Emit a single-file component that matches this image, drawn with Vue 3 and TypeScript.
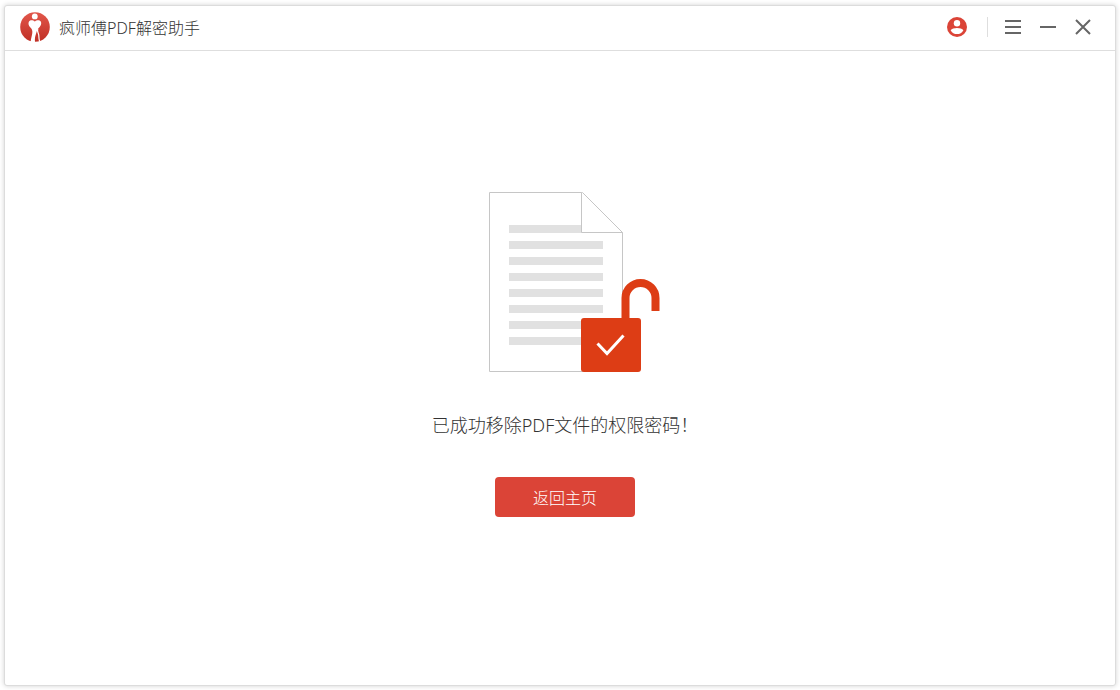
<script setup lang="ts">
import { ref } from 'vue'

const appName = ref('疯师傅PDF解密助手')
const message = ref('已成功移除PDF文件的权限密码！')
const lines: { y: number; width: number }[] = [
  { y: 33, width: 73 },
  { y: 49, width: 94 },
  { y: 65, width: 94 },
  { y: 81, width: 94 },
  { y: 97, width: 94 },
  { y: 113, width: 94 },
  { y: 129, width: 94 },
  { y: 145, width: 94 },
]
</script>

<template>
  <div class="desktop">
    <div class="window">
      <header class="titlebar">
        <svg class="logo" viewBox="0 0 30 30" aria-hidden="true">
          <defs>
            <linearGradient id="logo-fill" x1="0" y1="0" x2="0" y2="1">
              <stop offset="0" stop-color="#e2574b" />
              <stop offset="1" stop-color="#c02f25" />
            </linearGradient>
          </defs>
          <circle cx="15" cy="15" r="14.8" fill="url(#logo-fill)" />
          <circle cx="14.8" cy="4.4" r="2.9" fill="#fff" />
          <path
            d="M14.8 9.6C13 7.8 10.2 7.7 9 9.6C7.8 11.6 8.8 14 10.4 15.6C11.8 17 12.6 18.6 12.3 21C12 23.8 10.9 26.6 10.6 30H15C14.7 27 15 24.4 15.9 22.2C16.9 20 16.6 18.4 18.2 16.6C20.4 14.6 22 12 20.8 9.6C19.5 7.6 16.6 7.8 14.8 9.6Z"
            fill="#fff"
          />
          <path d="M17.8 16.5C16.8 19.6 18.6 21 18.8 23.5C18.9 25.5 18.9 27.3 19.6 29.6" fill="none" stroke="#fff" stroke-width="1.2" />
        </svg>
        <h1 class="title">{{ appName }}</h1>
        <button class="icon-button account" type="button" aria-label="账户">
          <svg viewBox="0 0 20 20" width="20" height="20">
            <circle cx="10" cy="10" r="10" fill="#db4437" />
            <circle cx="10" cy="6.2" r="3.2" fill="#fff" />
            <path d="M3.6 13.2C4.8 11.8 7.2 11 10 11S15.2 11.8 16.4 13.2C15 15.8 12.7 17.1 10 17.1S5 15.8 3.6 13.2Z" fill="#fff" />
          </svg>
        </button>
        <span class="divider"></span>
        <div class="controls">
          <button class="icon-button" type="button" aria-label="菜单">
            <svg viewBox="0 0 16 16" width="16" height="16">
              <path d="M0 2H16M0 8H16M0 14H16" />
            </svg>
          </button>
          <button class="icon-button" type="button" aria-label="最小化">
            <svg viewBox="0 0 16 16" width="16" height="16">
              <path d="M0 8H16" />
            </svg>
          </button>
          <button class="icon-button" type="button" aria-label="关闭">
            <svg viewBox="0 0 16 16" width="16" height="16">
              <path d="M1 1L15 15M15 1L1 15" />
            </svg>
          </button>
        </div>
      </header>

      <main class="content">
        <svg class="illustration" viewBox="0 0 152 180" aria-hidden="true">
          <path d="M0.5 0.5H93.5L133.5 40.5V179.5H0.5Z" fill="#fff" stroke="#c6c6c6" />
          <rect v-for="line in lines" :key="line.y" x="20" :y="line.y" :width="line.width" height="8" fill="#e1e1e1" />
          <path d="M92.5 0.5V40.5H133.5L93.5 0.5" fill="#fff" stroke="#c6c6c6" />
          <path d="M136.5 128V106A15 15 0 0 1 166.5 106V119" fill="none" stroke="#dd3d15" stroke-width="8" />
          <rect x="92" y="126" width="60" height="54" rx="3" fill="#dd3d15" />
          <path d="M108.5 151.5L118 161.5L134.5 143.5" fill="none" stroke="#fff" stroke-width="3" />
        </svg>
        <p class="message">{{ message }}</p>
        <button class="primary" type="button">返回主页</button>
      </main>
    </div>
  </div>
</template>

<style>
body {
  background: #fff;
}
</style>

<style scoped>
.desktop {
  box-sizing: border-box;
  display: flex;
  min-height: 100vh;
  padding: 5px 4px 4px;
}

.window {
  box-sizing: border-box;
  flex: 1;
  display: flex;
  flex-direction: column;
  border: 1px solid #dcdcdc;
  border-radius: 3px;
  background: #fff;
  box-shadow: 0 0 5px rgba(0, 0, 0, 0.18);
  font-family: "Noto Sans", "Noto Sans CJK SC", sans-serif;
  font-weight: 300;
  color: #333;
}

.titlebar {
  box-sizing: border-box;
  display: flex;
  align-items: center;
  height: 45px;
  padding: 0 24px 2px 15px;
  border-bottom: 1px solid #dedede;
}

.logo {
  width: 30px;
  height: 30px;
}

.title {
  flex: 1;
  margin: 0;
  padding: 2px 0 0 9px;
  font-size: 16px;
  line-height: 24px;
  font-weight: 300;
}

.icon-button {
  display: flex;
  padding: 0;
  border: 0;
  background: none;
  cursor: pointer;
}

.divider {
  width: 1px;
  height: 20px;
  margin: 0 17px 0 20px;
  background: #dedede;
}

.controls {
  display: flex;
  gap: 19px;
}

.controls path {
  fill: none;
  stroke: #666;
  stroke-width: 2;
}

.content {
  flex: 1;
  display: flex;
  flex-direction: column;
  align-items: center;
  padding: 141px 0 40px 10px;
}

.illustration {
  width: 152px;
  height: 180px;
  overflow: visible;
}

.message {
  margin: 40px 0 38px;
  font-size: 18px;
  line-height: 27px;
}

.primary {
  width: 140px;
  height: 40px;
  padding: 0;
  border: 0;
  border-radius: 4px;
  background: #db4437;
  color: #fff;
  font: inherit;
  font-size: 16px;
  cursor: pointer;
}
</style>
